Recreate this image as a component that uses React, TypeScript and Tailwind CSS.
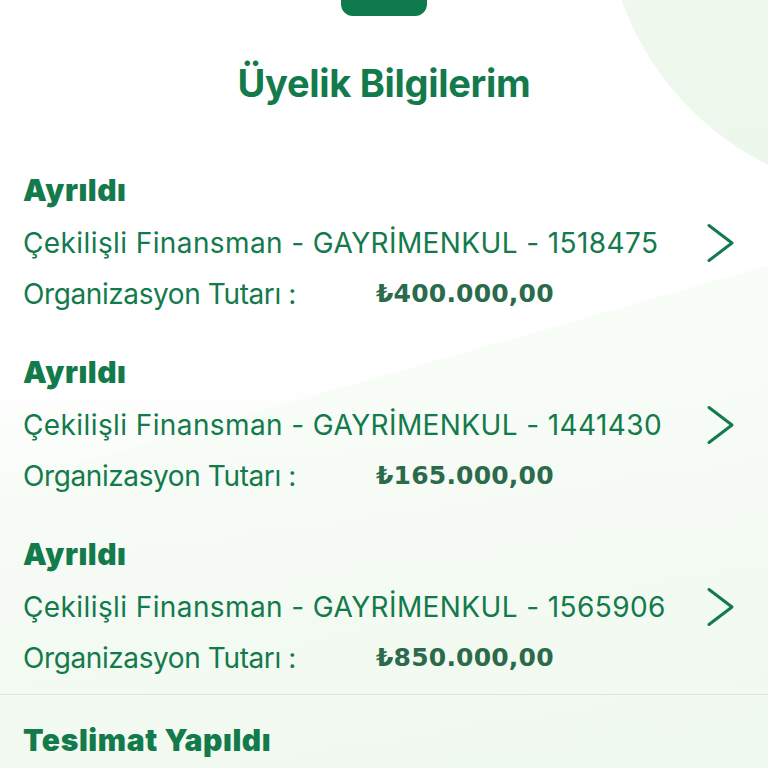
import React from "react";

type Membership = {
	status: string;
	title: string;
	amount: string;
};

const items: Membership[] = [
	{ status: "Ayrıldı", title: "Çekilişli Finansman - GAYRİMENKUL - 1518475", amount: "₺400.000,00" },
	{ status: "Ayrıldı", title: "Çekilişli Finansman - GAYRİMENKUL - 1441430", amount: "₺165.000,00" },
	{ status: "Ayrıldı", title: "Çekilişli Finansman - GAYRİMENKUL - 1565906", amount: "₺850.000,00" },
];

function Chevron() {
	return (
		<svg width="30" height="40" viewBox="0 0 30 40" fill="none">
			<path
				d="M3 2.5 L26 20 L3 37.5"
				stroke="#137a4c"
				strokeWidth="3"
				strokeLinecap="round"
				strokeLinejoin="round"
			/>
		</svg>
	);
}

function MembershipRow({ item }: { item: Membership }) {
	return (
		<div className="flex h-[182px] flex-col px-[23px]">
			<div className="flex h-[36px] items-center text-[30px] font-black tracking-[0.5px] text-[#137a4c]">{item.status}</div>
			<div className="mt-[17px] flex h-[36px] items-center justify-between">
				<span className="text-[28px] tracking-[0.4px] text-[#137a4c]">{item.title}</span>
				<span className="mr-[9px]">
					<Chevron />
				</span>
			</div>
			<div className="mt-[15px] flex h-[36px] items-center">
				<span className="w-[353px] text-[28px] tracking-[-0.4px] text-[#137a4c]">Organizasyon Tutarı :</span>
				<span className="text-[25px] font-bold tracking-[0.2px] text-[#2b6a4a] [font-family:'DejaVu_Sans',sans-serif]">
					{item.amount}
				</span>
			</div>
		</div>
	);
}

export default function App() {
	return (
		<div className="relative h-[768px] w-[768px] overflow-hidden bg-white [font-family:Inter,Roboto,'Noto_Sans',sans-serif]">
			{/* background decoration */}
			<div className="pointer-events-none absolute left-[604px] top-[-396px] h-[592px] w-[592px] rounded-full bg-gradient-to-b from-[#f4fbf3] to-[#ecf7eb]" />
			<div className="pointer-events-none absolute left-0 top-[360px] h-[420px] w-[768px] bg-gradient-to-b from-white via-[#f4faf3] to-[#ebf6ea]" />
			<div className="pointer-events-none absolute left-[-120px] top-[520px] h-[600px] w-[1100px] origin-top-left rotate-[-16deg] bg-gradient-to-b from-[#f7fcf6] to-[#eef8ed] opacity-80" />

			<div className="relative flex flex-col">
				<div className="flex justify-center">
					<div className="h-[16px] w-[86px] rounded-b-[12px] bg-[#0f7a4b]" />
				</div>
				<h1 className="mt-[45px] text-center text-[38px] font-bold leading-[44px] tracking-[-0.3px] text-[#137a4c]">
					Üyelik Bilgilerim
				</h1>
				<div className="mt-[67px] flex flex-col">
					{items.map((item, i) => (
						<MembershipRow key={i} item={item} />
					))}
				</div>
				<div className="mt-[-24px] h-px bg-[#dfe5df]" />
				<div className="px-[23px] pt-[23px] text-[30px] font-black tracking-[0.6px] text-[#137a4c]">Teslimat Yapıldı</div>
			</div>
		</div>
	);
}
